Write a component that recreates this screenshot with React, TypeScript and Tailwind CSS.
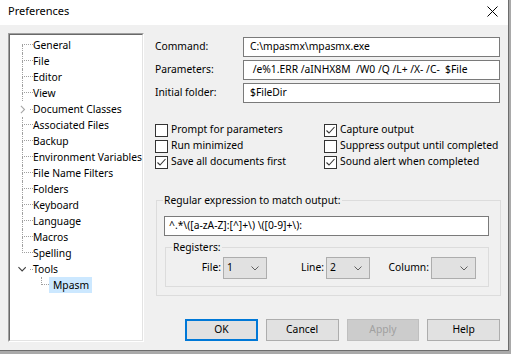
import React from "react";

const F = { fontFamily: '"Noto Sans", "Liberation Sans", sans-serif' };

function Chev({ color = "#606060" }: { color?: string }) {
  return (
    <svg width="8" height="5" viewBox="0 0 8 5">
      <polyline points="0.5,0.5 4,4 7.5,0.5" fill="none" stroke={color} strokeWidth="1" />
    </svg>
  );
}

function Check({ checked }: { checked?: boolean }) {
  return (
    <div className="w-[13px] h-[13px] border border-[#333333] bg-white flex items-center justify-center shrink-0">
      {checked && (
        <svg width="11" height="11" viewBox="0 0 11 11">
          <polyline points="1.5,5.5 4,8 9.5,2" fill="none" stroke="#333333" strokeWidth="1.1" />
        </svg>
      )}
    </div>
  );
}

function TreeRow({
  label,
  kind = "mid",
}: {
  label: string;
  kind?: "first" | "mid" | "last" | "collapsed" | "expanded";
}) {
  return (
    <div className="flex h-[16px] items-stretch">
      <div className="w-[12px] shrink-0" />
      {kind === "collapsed" || kind === "expanded" ? (
        <div className="w-[11px] shrink-0 flex items-center">
          {kind === "collapsed" ? (
            <svg width="7" height="9" viewBox="0 0 7 9" className="-ml-[2px]">
              <polyline points="1,0.5 5,4.5 1,8.5" fill="none" stroke="#a6a6a6" strokeWidth="1.2" />
            </svg>
          ) : (
            <svg width="9" height="7" viewBox="0 0 9 7" className="-ml-[4px]">
              <polyline points="0.5,1 4.5,5 8.5,1" fill="none" stroke="#404040" strokeWidth="1.2" />
            </svg>
          )}
          <div className="ml-[4px] w-[3px] border-b border-dotted border-[#a0a0a0] h-[1px]" />
        </div>
      ) : (
        <div className="w-[11px] shrink-0 flex flex-col">
          <div
            className={
              "h-[8px] border-b border-dotted border-[#a0a0a0] " +
              (kind === "first" ? "border-l-0" : "border-l border-l-[#a0a0a0]")
            }
            style={{ borderLeftStyle: "dotted" }}
          />
          <div
            className={"h-[8px] " + (kind === "last" ? "" : "border-l border-dotted border-[#a0a0a0]")}
          />
        </div>
      )}
      <div className="text-[10.3px] leading-[16px] text-black whitespace-nowrap">{label}</div>
    </div>
  );
}

function Combo({ value, w }: { value?: string; w: string }) {
  return (
    <div className={`${w} h-[22px] bg-[#e1e1e1] border border-[#adadad] flex items-center justify-between pl-[3px] pr-[7px] text-[10.3px] text-black`}>
      <span>{value ?? ""}</span>
      <Chev />
    </div>
  );
}

function Btn({ label, primary, disabled }: { label: string; primary?: boolean; disabled?: boolean }) {
  return (
    <div
      className={
        "w-[73px] h-[22px] flex items-center justify-center text-[10.3px] " +
        (primary
          ? "border-2 border-[#0078d7] bg-[#e1e1e1] text-black"
          : disabled
          ? "border border-[#bfbfbf] bg-[#cccccc] text-[#a0a0a0]"
          : "border border-[#adadad] bg-[#e1e1e1] text-black")
      }
    >
      {label}
    </div>
  );
}

export default function App() {
  return (
    <div className="w-[511px] h-[354px] bg-[#a9a9a9] overflow-hidden" style={F}>
      <div className="w-[509px] h-[351px] bg-[#f0f0f0] border-r border-b border-[#6d6d6d] flex flex-col">
        {/* Title bar */}
        <div className="h-[25px] bg-white flex items-center justify-between pl-[8px] pr-[10px] shrink-0">
          <span className="text-[11px] text-black leading-[16px] -mt-[3px]">Preferences</span>
          <svg width="11" height="11" viewBox="0 0 11 11" className="-mt-[3px]">
            <line x1="0.5" y1="0.5" x2="10.5" y2="10.5" stroke="#000" strokeWidth="1" />
            <line x1="10.5" y1="0.5" x2="0.5" y2="10.5" stroke="#000" strokeWidth="1" />
          </svg>
        </div>

        {/* Body */}
        <div className="flex pt-[8px]">
          {/* Tree */}
          <div className="ml-[8px] w-[136px] h-[309px] border-t border-l border-t-[#a0a0a0] border-l-[#a0a0a0] border-b border-r border-b-white border-r-white shrink-0">
            <div className="w-full h-full bg-white border-t border-l border-t-[#696969] border-l-[#696969] border-b border-r border-b-[#e3e3e3] border-r-[#e3e3e3] pt-[2px]">
              <TreeRow label="General" kind="first" />
              <TreeRow label="File" />
              <TreeRow label="Editor" />
              <TreeRow label="View" />
              <TreeRow label="Document Classes" kind="collapsed" />
              <TreeRow label="Associated Files" />
              <TreeRow label="Backup" />
              <TreeRow label="Environment Variables" />
              <TreeRow label="File Name Filters" />
              <TreeRow label="Folders" />
              <TreeRow label="Keyboard" />
              <TreeRow label="Language" />
              <TreeRow label="Macros" />
              <TreeRow label="Spelling" kind="last" />
              <TreeRow label="Tools" kind="expanded" />
              <div className="flex h-[16px] items-stretch">
                <div className="w-[31px] shrink-0" />
                <div className="w-[8px] shrink-0 flex flex-col">
                  <div className="h-[8px] border-l border-b border-dotted border-[#a0a0a0]" />
                </div>
                <div className="bg-[#cce8ff] text-[10.3px] leading-[16px] text-black pl-[4px] pr-[3px] whitespace-nowrap">
                  Mpasm
                </div>
              </div>
            </div>
          </div>

          {/* Right column */}
          <div className="ml-[11px] w-[345px] flex flex-col pt-[4px]">
            {[
              ["Command:", "C:\\mpasmx\\mpasmx.exe"],
              ["Parameters:", " /e%1.ERR /aINHX8M  /W0 /Q /L+ /X- /C-  $File"],
              ["Initial folder:", "$FileDir"],
            ].map(([l, v], i) => (
              <div key={l} className={"flex h-[20px] items-center " + (i > 0 ? "mt-[3px]" : "")}>
                <div className="w-[88px] text-[10.3px] text-black whitespace-nowrap">{l}</div>
                <div className="flex-1 h-[20px] bg-white border border-[#7a7a7a] flex items-center pl-[6px] text-[10.3px] text-black whitespace-pre overflow-hidden">
                  {v}
                </div>
              </div>
            ))}

            {/* Checkboxes */}
            <div className="grid grid-cols-[169px_1fr] mt-[19px]">
              {[
                ["Prompt for parameters", false],
                ["Capture output", true],
                ["Run minimized", false],
                ["Suppress output until completed", false],
                ["Save all documents first", true],
                ["Sound alert when completed", true],
              ].map(([l, c]) => (
                <div key={l as string} className="flex items-center h-[16px] gap-[3px]">
                  <Check checked={c as boolean} />
                  <span className="text-[10.3px] text-black whitespace-nowrap">{l as string}</span>
                </div>
              ))}
            </div>

            {/* Regex group */}
            <fieldset className="mt-[22px] ml-[1px] w-[345px] border border-[#dcdcdc] pl-[7px] pr-[11px] pb-[8px]">
              <legend className="ml-[-1px] px-[1px] text-[10.3px] leading-[16px] text-black">
                Regular expression to match output:
              </legend>
              <div className="mt-[8px] h-[20px] bg-white border border-[#7a7a7a] flex items-center pl-[4px] text-[10.3px] text-black whitespace-pre">
                {"^.*\\([a-zA-Z]:[^]+\\) \\([0-9]+\\):"}
              </div>
              <fieldset className="mt-[3px] ml-[1px] border border-[#dcdcdc] pb-[7px]">
                <legend className="ml-[6px] px-[1px] text-[10.3px] leading-[16px] text-black">Registers:</legend>
                <div className="mt-[2px] flex items-center text-[10.3px] text-black">
                  <div className="w-[57px] text-right pr-[2px]">File:</div>
                  <Combo value="1" w="w-[44px]" />
                  <div className="w-[59px] text-right pr-[2px]">Line:</div>
                  <Combo value="2" w="w-[44px]" />
                  <div className="w-[61px] text-right pr-[2px]">Column:</div>
                  <Combo w="w-[45px]" />
                </div>
              </fieldset>
            </fieldset>

            {/* Buttons */}
            <div className="flex gap-[8px] pl-[30px] mt-[23px]">
              <Btn label="OK" primary />
              <Btn label="Cancel" />
              <Btn label="Apply" disabled />
              <Btn label="Help" />
            </div>
          </div>
        </div>
      </div>
    </div>
  );
}
